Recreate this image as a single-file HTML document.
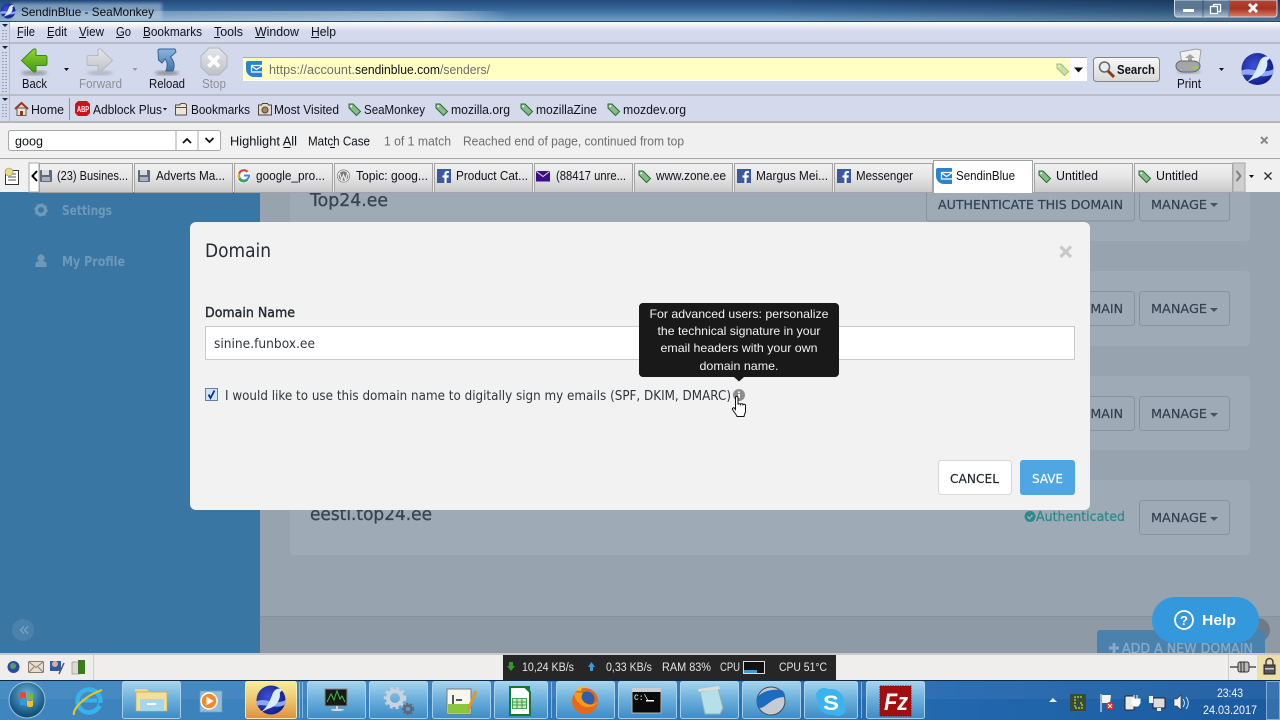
<!DOCTYPE html>
<html><head><meta charset="utf-8"><title>SendinBlue - SeaMonkey</title>
<style>
html,body{margin:0;padding:0;background:#97a3af;overflow:hidden}
svg{display:block;position:absolute;left:0;top:0}
text{font-family:"Liberation Sans",sans-serif;font-size:12.5px;fill:#10121a;white-space:pre}
.p{font-family:"DejaVu Sans",sans-serif}
.g{fill:#6e6e6e}
.l{fill:#8b8f96}
.m{font-family:"DejaVu Sans",sans-serif;font-size:12.5px;fill:#323f4f;stroke:#323f4f;stroke-width:.2}
.s{font-family:"Liberation Sans",sans-serif;font-size:11.5px;fill:#e4e4e4}
.u{stroke:#10121a;stroke-width:1}
</style></head><body>
<svg width="1280" height="720" viewBox="0 0 1280 720" xmlns="http://www.w3.org/2000/svg">
<defs>
<linearGradient id="tb" x1="0" y1="0" x2="0" y2="1"><stop offset="0" stop-color="#22497a"/><stop offset=".5" stop-color="#3a6da0"/><stop offset="1" stop-color="#739fc6"/></linearGradient>
<linearGradient id="tbx" x1="0" y1="0" x2="1" y2="0"><stop offset="0" stop-color="#000" stop-opacity="0"/><stop offset=".6" stop-color="#000" stop-opacity="0"/><stop offset="1" stop-color="#000" stop-opacity=".28"/></linearGradient>
<linearGradient id="tbg" x1="0" y1="0" x2="1" y2="0"><stop offset="0" stop-color="#fff" stop-opacity=".15"/><stop offset=".85" stop-color="#fff" stop-opacity=".45"/><stop offset="1" stop-color="#fff" stop-opacity="0"/></linearGradient>
<linearGradient id="mn" x1="0" y1="0" x2="0" y2="1"><stop offset="0" stop-color="#fff"/><stop offset=".45" stop-color="#d4daed"/><stop offset="1" stop-color="#d3d9ec"/></linearGradient>
<linearGradient id="tab" x1="0" y1="0" x2="0" y2="1"><stop offset="0" stop-color="#f1f1f1"/><stop offset=".4" stop-color="#e8e8e8"/><stop offset="1" stop-color="#c9c9c9"/></linearGradient>
<linearGradient id="sb" x1="0" y1="0" x2="0" y2="1"><stop offset="0" stop-color="#f8f8f8"/><stop offset="1" stop-color="#d8d8d8"/></linearGradient>
<linearGradient id="tk" x1="0" y1="0" x2="1" y2="0"><stop offset="0" stop-color="#3f86bf"/><stop offset=".3" stop-color="#3880bd"/><stop offset=".74" stop-color="#2268ae"/><stop offset="1" stop-color="#1b5a9f"/></linearGradient>
<linearGradient id="tkb" x1="0" y1="0" x2="0" y2="1"><stop offset="0" stop-color="#a6d4ee"/><stop offset=".5" stop-color="#69aedb"/><stop offset="1" stop-color="#3f8bc5"/></linearGradient>
<linearGradient id="tka" x1="0" y1="0" x2="0" y2="1"><stop offset="0" stop-color="#f5ee9a"/><stop offset=".5" stop-color="#efc56c"/><stop offset="1" stop-color="#dd8f3f"/></linearGradient>
<linearGradient id="gn" x1="0" y1="0" x2="0" y2="1"><stop offset="0" stop-color="#96d430"/><stop offset="1" stop-color="#3f9a12"/></linearGradient>
<linearGradient id="gy" x1="0" y1="0" x2="0" y2="1"><stop offset="0" stop-color="#e4e6ea"/><stop offset="1" stop-color="#bfc2c8"/></linearGradient>
<linearGradient id="bl" x1="0" y1="0" x2="0" y2="1"><stop offset="0" stop-color="#8cb5e0"/><stop offset="1" stop-color="#3e74ad"/></linearGradient>
<linearGradient id="red" x1="0" y1="0" x2="0" y2="1"><stop offset="0" stop-color="#b2483a"/><stop offset=".5" stop-color="#a8321f"/><stop offset="1" stop-color="#d8806c"/></linearGradient>
<linearGradient id="wb" x1="0" y1="0" x2="0" y2="1"><stop offset="0" stop-color="#5b7896"/><stop offset=".5" stop-color="#5a7693"/><stop offset="1" stop-color="#a6bccf"/></linearGradient>
<radialGradient id="sm" cx=".4" cy=".4" r=".7"><stop offset="0" stop-color="#3d50d8"/><stop offset="1" stop-color="#0c1a80"/></radialGradient>
<radialGradient id="orb" cx=".5" cy=".35" r=".7"><stop offset="0" stop-color="#6fb4d8"/><stop offset=".7" stop-color="#1b5f8c"/><stop offset="1" stop-color="#0d3d60"/></radialGradient>
<filter id="bl1"><feGaussianBlur stdDeviation="1.6"/></filter>
<g id="tag"><path d="M1 1 L5 1 L12.500 8.500 L8.500 12.500 L1 5 Z" fill="#86bd88" stroke="#2a6b3a" stroke-width="1"/><circle cx="3.200" cy="3.200" r=".9" fill="#fff"/></g>
<g id="fb"><rect width="14" height="14" fill="#3b5a9e"/><path d="M9.600 14V8.600h1.900l.3-2.200H9.600V5.100c0-.7.2-1.100 1.100-1.100h1.200V2.100C11.600 2 11 2 10.300 2 8.600 2 7.400 3 7.400 4.900v1.500H5.500v2.200h1.900V14z" fill="#fff"/></g>
<g id="doc"><rect x="1" y="1" width="12" height="12" rx="1" fill="#5d6b7c"/><rect x="3" y="1" width="7" height="5" fill="#d7dbe2"/><rect x="3" y="8" width="8" height="4" fill="#a9b2bd"/></g>
<g id="sib"><path d="M2 0H16V16H8A8 8 0 0 1 0 8V2A2 2 0 0 1 2 0Z" fill="#2a83d0"/><path d="M16 4.500H5.500V11H16M5.500 5L10.500 8.500L16 5" fill="none" stroke="#fff" stroke-width="1.200"/></g>
<g id="logo"><circle r="10" fill="url(#sm)"/><path d="M-10 1 C-4 -2 3 4 10 0 L10 3 C3 7 -4 2 -10 4Z" fill="#8fa6f5"/><path d="M-8 9 C-3 6 -1 1 1 -4 C2 -7 5 -9 8 -7 L6 -5 C7 0 3 5 -2 6 C-4 7 -6 8 -8 9Z" fill="#d9ecfb"/></g>
<g id="caret"><path d="M0 0h8l-4 4z" fill="#4a525c"/></g>
</defs>

<!-- page background -->
<rect y="192" width="1280" height="462" fill="#97a3af"/>
<rect y="192" width="260" height="462" fill="#3a76a3"/>
<rect x="260" y="616" width="1020" height="38" fill="#8e9aa5"/>
<rect x="260" y="616" width="1020" height="1" fill="#87939e"/>
<rect x="290" y="150" width="960" height="91" rx="4" fill="#9eaab6"/>
<rect x="290" y="271" width="960" height="75" rx="4" fill="#9eaab6"/>
<rect x="290" y="376" width="960" height="74" rx="4" fill="#9eaab6"/>
<rect x="290" y="480" width="960" height="75" rx="4" fill="#9eaab6"/>

<!-- sidebar -->
<circle cx="41" cy="210" r="4.500" fill="none" stroke="#6e99b9" stroke-width="3.200"/>
<circle cx="41" cy="210" r="6" fill="none" stroke="#6e99b9" stroke-width="1.600" stroke-dasharray="2 2.700"/>
<text x="62" y="215" textLength="50" lengthAdjust="spacingAndGlyphs" class="p" style="font-size:13px;font-weight:700;fill:#6e99b9">Settings</text>
<circle cx="41" cy="258" r="3.600" fill="#6e99b9"/><path d="M35.500 267v-3c0-2 2-3 5.500-3s5.500 1 5.500 3v3z" fill="#6e99b9"/>
<text x="62" y="266" textLength="63" lengthAdjust="spacingAndGlyphs" class="p" style="font-size:13px;font-weight:700;fill:#6e99b9">My Profile</text>
<circle cx="23" cy="630" r="11" fill="#4a82ab"/>
<path d="M24 626.500l-3.500 3.500 3.500 3.500M28 626.500l-3.500 3.500 3.500 3.500" fill="none" stroke="#7ba3c2" stroke-width="1.300"/>

<!-- rows -->
<text x="310" y="206" textLength="78" lengthAdjust="spacingAndGlyphs" class="p" style="font-size:18px;font-weight:400;fill:#38434f;stroke:#38434f;stroke-width:.3">Top24.ee</text>
<text x="310" y="520" textLength="122" lengthAdjust="spacingAndGlyphs" class="p" style="font-size:18px;fill:#38434f;stroke:#38434f;stroke-width:.3">eesti.top24.ee</text>

<rect x="926.500" y="180" width="208" height="41" rx="3" fill="none" stroke="#8793a0"/>
<text x="938" y="209" textLength="185" lengthAdjust="spacingAndGlyphs" class="m">AUTHENTICATE THIS DOMAIN</text>
<rect x="926.500" y="291.500" width="208" height="34" rx="3" fill="none" stroke="#8793a0"/>
<text x="938" y="313" textLength="185" lengthAdjust="spacingAndGlyphs" class="m">AUTHENTICATE THIS DOMAIN</text>
<rect x="926.500" y="396.500" width="208" height="34" rx="3" fill="none" stroke="#8793a0"/>
<text x="938" y="418" textLength="185" lengthAdjust="spacingAndGlyphs" class="m">AUTHENTICATE THIS DOMAIN</text>

<rect x="1139.500" y="180" width="90" height="41" rx="3" fill="none" stroke="#8793a0"/>
<text x="1151" y="209" textLength="56" lengthAdjust="spacingAndGlyphs" class="m">MANAGE</text><use href="#caret" x="1210" y="203"/>
<rect x="1139.500" y="291.500" width="90" height="34" rx="3" fill="none" stroke="#8793a0"/>
<text x="1151" y="313" textLength="56" lengthAdjust="spacingAndGlyphs" class="m">MANAGE</text><use href="#caret" x="1210" y="308"/>
<rect x="1139.500" y="396.500" width="90" height="34" rx="3" fill="none" stroke="#8793a0"/>
<text x="1151" y="418" textLength="56" lengthAdjust="spacingAndGlyphs" class="m">MANAGE</text><use href="#caret" x="1210" y="413"/>
<rect x="1139.500" y="500.500" width="90" height="34" rx="3" fill="none" stroke="#8793a0"/>
<text x="1151" y="522" textLength="56" lengthAdjust="spacingAndGlyphs" class="m">MANAGE</text><use href="#caret" x="1210" y="517"/>

<circle cx="1030" cy="516.500" r="5.500" fill="#2c8a8a"/><path d="M1027.500 516.500l2 2 3-3.500" fill="none" stroke="#9eaab6" stroke-width="1.500"/>
<text x="1036" y="521" textLength="89" lengthAdjust="spacingAndGlyphs" class="p" style="font-size:13px;fill:#2c8a8a;stroke:#2c8a8a;stroke-width:.25">Authenticated</text>

<!-- add new + help -->
<circle cx="1258" cy="630" r="12" fill="#6f7a85"/>
<rect x="1097" y="630" width="168" height="30" rx="3" fill="#4b82ad"/>
<path d="M1109 648h10M1114 643v10" stroke="#86abc8" stroke-width="3"/>
<text x="1122" y="653" textLength="131" lengthAdjust="spacingAndGlyphs" class="p" style="font-size:13px;fill:#86abc8;stroke:#86abc8;stroke-width:.35">ADD A NEW DOMAIN</text>
<rect x="1152" y="597" width="107" height="46" rx="23" fill="#3398dc"/>
<circle cx="1184" cy="620" r="9" fill="none" stroke="#fff" stroke-width="1.800"/>
<text x="1180" y="625" style="font-size:13px;font-weight:700;fill:#fff">?</text>
<text x="1202" y="625" textLength="34" lengthAdjust="spacingAndGlyphs" style="font-size:15px;font-weight:700;fill:#fff">Help</text>

<!-- modal -->
<rect x="190" y="222" width="900" height="288" rx="6" fill="#f2f2f2"/>
<text x="205" y="257" textLength="66" lengthAdjust="spacingAndGlyphs" class="p" style="font-size:18.500px;fill:#262b33">Domain</text>
<path d="M1060.500 246.500l10.500 10.500M1071 246.500l-10.500 10.500" stroke="#c9c9c9" stroke-width="3.200"/>
<text x="205" y="317" textLength="90" lengthAdjust="spacingAndGlyphs" class="p" style="font-size:13.500px;fill:#262b33;stroke:#262b33;stroke-width:.4">Domain Name</text>
<rect x="205.500" y="326.500" width="869" height="33" fill="#fff" stroke="#cbcbcb"/>
<text x="214" y="348" textLength="101" lengthAdjust="spacingAndGlyphs" class="p" style="font-size:13.500px;fill:#30353c">sinine.funbox.ee</text>
<rect x="205.500" y="388.500" width="12" height="12" fill="#cfe4f7" stroke="#5d84a6"/>
<path d="M208.500 394.500l2 3.500 4-7.500" fill="none" stroke="#0d2d8a" stroke-width="1.800"/>
<text x="225" y="400" textLength="506" lengthAdjust="spacingAndGlyphs" class="p" style="font-size:13px;fill:#30353c">I would like to use this domain name to digitally sign my emails (SPF, DKIM, DMARC)</text>
<circle cx="739" cy="395" r="6" fill="#8d8d8d"/><rect x="738" y="394" width="2" height="4" fill="#f0f0f0"/><rect x="738" y="391.500" width="2" height="1.600" fill="#f0f0f0"/>
<rect x="938.500" y="460.500" width="73" height="34" rx="3" fill="#fff" stroke="#d8d8d8"/>
<text x="950" y="483" textLength="49" lengthAdjust="spacingAndGlyphs" class="p" style="font-size:12.500px;fill:#20242a;stroke:#20242a;stroke-width:.15">CANCEL</text>
<rect x="1020" y="460" width="55" height="35" rx="3" fill="#4fa6e3"/>
<text x="1032" y="483" textLength="31" lengthAdjust="spacingAndGlyphs" class="p" style="font-size:12.500px;fill:#fff;stroke:#fff;stroke-width:.15">SAVE</text>

<!-- tooltip -->
<rect x="639" y="303" width="200" height="74" rx="4" fill="#191919"/>
<path d="M734 377h10l-5 4.500z" fill="#191919"/>
<text x="739" y="318" text-anchor="middle" textLength="179" lengthAdjust="spacingAndGlyphs" style="font-size:12px;fill:#f2f2f2">For advanced users: personalize</text>
<text x="739" y="335" text-anchor="middle" textLength="163" lengthAdjust="spacingAndGlyphs" style="font-size:12px;fill:#f2f2f2">the technical signature in your</text>
<text x="739" y="352" text-anchor="middle" textLength="157" lengthAdjust="spacingAndGlyphs" style="font-size:12px;fill:#f2f2f2">email headers with your own</text>
<text x="739" y="370" text-anchor="middle" textLength="79" lengthAdjust="spacingAndGlyphs" style="font-size:12px;fill:#f2f2f2">domain name.</text>
<!-- cursor -->
<path d="M735.500 397.500c0-1.500 2.500-1.500 2.500 0v7c.5-1 2.300-1 2.500 0 .4-1 2.300-1 2.500.2.500-.8 2.500-.6 2.500.8v5.500c0 2-1 3-1.500 5.500h-7c-.5-2-3.500-5-4.500-7-.6-1.300 1-2.300 2-1.300l1 1.300z" fill="#fff" stroke="#111" stroke-width="1"/>

<!-- title bar -->
<rect width="1280" height="21" fill="url(#tb)"/>
<rect width="1280" height="21" fill="url(#tbx)"/>
<rect x="0" y="11" width="510" height="10" fill="url(#tbg)"/>
<rect x="0" y="21" width="1280" height="1" fill="#2a4864"/>
<rect x="12" y="3" width="150" height="17" fill="#c3d4e2" opacity=".5" filter="url(#bl1)"/>
<use href="#logo" transform="translate(8,11) scale(.75)"/>
<text x="21" y="16" textLength="133" lengthAdjust="spacingAndGlyphs" style="font-size:12px;fill:#0c0c10">SendinBlue - SeaMonkey</text>
<g>
<path d="M1174.500 0v14a3 3 0 0 0 3 3H1229V0z" fill="url(#wb)" stroke="#cfdbe6" stroke-width="1"/>
<path d="M1229 0h48v14a3 3 0 0 1-3 3h-45z" fill="url(#red)" stroke="#cfdbe6" stroke-width="1"/>
<path d="M1203 0v17M1229 0v17" stroke="#24384d" stroke-opacity=".6"/>
<rect x="1183" y="9" width="11" height="3" fill="#fff"/>
<rect x="1213.500" y="4.500" width="7" height="7" fill="none" stroke="#fff" stroke-width="1.300"/><rect x="1210.500" y="6.500" width="7" height="7" fill="#5a7693" stroke="#fff" stroke-width="1.300"/>
<path d="M1249 4l8 8M1257 4l-8 8" stroke="#fff" stroke-width="3"/>
</g>

<!-- menubar -->
<rect y="22" width="1280" height="20" fill="url(#mn)"/>
<rect y="42" width="1280" height="2" fill="#b8bbc3"/>
<rect y="44" width="1280" height="50" fill="#d3d9ec"/>
<rect y="94" width="1280" height="2" fill="#babdc6"/>
<rect y="96" width="1280" height="25" fill="#d4daeb"/>
<rect y="121" width="1280" height="2" fill="#b6b6b6"/>
<rect y="123" width="1280" height="35" fill="#f0f0f0"/>
<rect y="158" width="1280" height="1" fill="#a8a8a8"/>
<rect y="159" width="1280" height="33" fill="#f0f0f0"/>
<!-- grips -->
<g fill="#4a5a75">
<rect x="0" y="22" width="9" height="20" fill="#d3d9ec"/><rect x="0" y="44" width="9" height="50" fill="#d3d9ec"/><rect x="0" y="96" width="9" height="25" fill="#d3d9ec"/>
<rect x="9" y="22" width="1" height="99" fill="#b8bbc3"/>
<path d="M2 24h6l-3 3z M2 46h6l-3 3z M2 98h6l-3 3z" fill="#1a2440"/>
<path d="M3 30v10M6 30v10M3 52v40M6 52v40M3 104v15M6 104v15" stroke="#606a85" stroke-width="1" stroke-dasharray="1 2" fill="none"/>
</g>
<g>
<text x="17" y="36" textLength="18" lengthAdjust="spacingAndGlyphs">File</text>
<text x="47" y="36" textLength="20" lengthAdjust="spacingAndGlyphs">Edit</text>
<text x="79" y="36" textLength="25" lengthAdjust="spacingAndGlyphs">View</text>
<text x="116" y="36" textLength="15" lengthAdjust="spacingAndGlyphs">Go</text>
<text x="143" y="36" textLength="59" lengthAdjust="spacingAndGlyphs">Bookmarks</text>
<text x="214" y="36" textLength="29" lengthAdjust="spacingAndGlyphs">Tools</text>
<text x="255" y="36" textLength="44" lengthAdjust="spacingAndGlyphs">Window</text>
<text x="311" y="36" textLength="25" lengthAdjust="spacingAndGlyphs">Help</text>
<path class="u" d="M17 37.500h6M47 37.500h6M79 37.500h7M116 37.500h8M143 37.500h7M214 37.500h6M255 37.500h10M311 37.500h8"/>
</g>

<!-- nav toolbar -->
<ellipse cx="34" cy="73" rx="13" ry="2.500" fill="#666" opacity=".55" filter="url(#bl1)"/>
<path d="M21.500 60.500L33 49.500q2-1.500 3 .5v5.500h9q2 0 2 2v6q0 2-2 2h-9v5.500q-1 2-3 .5z" fill="url(#gn)" stroke="#3d8a13"/>
<path d="M64 68h5l-2.500 3z" fill="#111"/>
<ellipse cx="100" cy="73" rx="13" ry="2.500" fill="#888" opacity=".4" filter="url(#bl1)"/>
<path d="M112.500 60.500L101 49.500q-2-1.500-3 .5v5.500h-9q-2 0-2 2v6q0 2 2 2h9v5.500q1 2 3 .5z" fill="url(#gy)" stroke="#b5b8be"/>
<path d="M132.500 68h5l-2.500 3z" fill="#9a9a9a"/>
<ellipse cx="167" cy="73" rx="12" ry="2.500" fill="#555" opacity=".55" filter="url(#bl1)"/>
<path d="M158 50.500Q158 49 160 49L175 49L176 52L170.500 57C174 61 175 66 173 71L166 71C168 65 167 61 165 59L162 63L158.500 60Z" fill="url(#bl)" stroke="#38618f"/>
<path d="M209 48h10l8 8v11l-8 8h-10l-8-8v-11z" fill="url(#gy)" stroke="#b2b5bb"/>
<path d="M208.500 56l10.500 10.500M219 56l-10.500 10.500" stroke="#fff" stroke-width="3.800"/>
<text x="22" y="88" textLength="25" lengthAdjust="spacingAndGlyphs">Back</text>
<text x="79" y="88" textLength="43" lengthAdjust="spacingAndGlyphs" class="l">Forward</text>
<text x="149" y="88" textLength="36" lengthAdjust="spacingAndGlyphs">Reload</text>
<text x="202" y="88" textLength="24" lengthAdjust="spacingAndGlyphs" class="l">Stop</text>

<!-- url bar -->
<rect x="243" y="58" width="844" height="23" fill="#fff"/>
<rect x="243" y="58" width="827" height="22" fill="#ffffc4"/>
<rect x="243" y="57" width="844" height="1" fill="#a9a9a9"/>
<use href="#sib" transform="translate(246,61)"/>
<text x="269" y="74" textLength="86" lengthAdjust="spacingAndGlyphs" class="g">https://account.</text>
<text x="355" y="74" textLength="85" lengthAdjust="spacingAndGlyphs">sendinblue.com</text>
<text x="440" y="74" textLength="50" lengthAdjust="spacingAndGlyphs" class="g">/senders/</text>
<g opacity=".45" transform="translate(1056,63)"><use href="#tag"/></g>
<path d="M1074 67.500h9l-4.500 5z" fill="#111"/>
<rect x="1093.500" y="57.500" width="66" height="24" rx="3" fill="url(#sb)" stroke="#858585"/>
<circle cx="1104.500" cy="67" r="5" fill="#e6eef4" stroke="#666" stroke-width="1.500"/>
<path d="M1108 71l6 6" stroke="#8a3d10" stroke-width="3"/>
<text x="1117" y="74" textLength="38" lengthAdjust="spacingAndGlyphs" style="font-weight:700;font-size:12.500px">Search</text>
<!-- print -->
<ellipse cx="1189" cy="72" rx="12" ry="2" fill="#777" opacity=".5" filter="url(#bl1)"/>
<path d="M1180 52l16-3 5 1-2 14h-17z" fill="#f1f1f1" stroke="#a0a0a0"/>
<path d="M1190 54l-5 4h3v4h4v-4h3z" fill="#a5a5a5"/>
<path d="M1176 66c0-3 3-5 5-5h12c4 0 7 2 7 5s-3 6-9 6h-8c-4 0-7-3-7-6z" fill="#a3a5aa" stroke="#666"/>
<ellipse cx="1195" cy="67.500" rx="3" ry="1.500" fill="#8ed04a"/>
<text x="1177" y="88" textLength="24" lengthAdjust="spacingAndGlyphs">Print</text>
<path d="M1219 68h5l-2.500 3z" fill="#111"/>
<use href="#logo" transform="translate(1257.500,69) scale(1.600)"/>

<!-- bookmarks -->
<path d="M15 109l6.500-6 6.500 6" fill="none" stroke="#a0331d" stroke-width="2"/><rect x="17" y="108" width="9" height="7.500" fill="#ece6da" stroke="#6b5b4b"/><rect x="20" y="111" width="3" height="4.500" fill="#8a3d10"/>
<text x="31" y="114" textLength="33" lengthAdjust="spacingAndGlyphs">Home</text>
<rect x="69" y="98" width="1" height="22" fill="#8a8f9c"/>
<path d="M78 101h9l3 3v9l-3 3h-9l-3-3v-9z" fill="#d1111a"/>
<text x="77" y="112" textLength="12" lengthAdjust="spacingAndGlyphs" style="font-size:8px;font-weight:700;fill:#fff">ABP</text>
<text x="93" y="114" textLength="69" lengthAdjust="spacingAndGlyphs">Adblock Plus</text>
<path d="M163 108h4l-2 2.500z" fill="#111"/>
<path d="M175.500 115v-10h4l1.500-1.500h4l1.500 1.500v10z" fill="#ece6da" stroke="#584c3c"/><rect x="176" y="107" width="11" height="1" fill="#584c3c"/>
<text x="191" y="114" textLength="59" lengthAdjust="spacingAndGlyphs">Bookmarks</text>
<path d="M258.500 115v-10h3l1-1.500h5l1 1.500h3v10z" fill="#e3dcce" stroke="#4f4337"/><circle cx="265" cy="110" r="3" fill="#b08663" stroke="#4f4337"/>
<text x="274" y="114" textLength="65" lengthAdjust="spacingAndGlyphs">Most Visited</text>
<use href="#tag" x="348" y="103"/><text x="364" y="114" textLength="61" lengthAdjust="spacingAndGlyphs">SeaMonkey</text>
<use href="#tag" x="435" y="103"/><text x="451" y="114" textLength="59" lengthAdjust="spacingAndGlyphs">mozilla.org</text>
<use href="#tag" x="520" y="103"/><text x="536" y="114" textLength="61" lengthAdjust="spacingAndGlyphs">mozillaZine</text>
<use href="#tag" x="607" y="103"/><text x="623" y="114" textLength="63" lengthAdjust="spacingAndGlyphs">mozdev.org</text>

<!-- find bar -->
<rect x="8.500" y="130.500" width="212" height="20" rx="2" fill="#fff" stroke="#a9a9a9"/>
<path d="M176 130v21M198 130v21" stroke="#a9a9a9"/>
<path d="M183 143l4-4 4 4M205.500 138l4 4 4-4" fill="none" stroke="#111" stroke-width="1.800"/>
<text x="15" y="145.500" textLength="28" lengthAdjust="spacingAndGlyphs">goog</text>
<text x="230" y="145.500" textLength="67" lengthAdjust="spacingAndGlyphs">Highlight All</text>
<path class="u" d="M283.500 147.500h7M330 147.500h5"/>
<text x="308" y="145.500" textLength="62" lengthAdjust="spacingAndGlyphs">Match Case</text>
<text x="384" y="145.500" textLength="67" lengthAdjust="spacingAndGlyphs" class="g">1 of 1 match</text>
<text x="463" y="145.500" textLength="221" lengthAdjust="spacingAndGlyphs" class="g">Reached end of page, continued from top</text>
<path d="M1261 137l6.500 6.500M1267.500 137l-6.500 6.500" stroke="#8a8a8a" stroke-width="2"/>

<!-- tabs -->
<rect x="5.500" y="170.500" width="13" height="14" fill="#fff" stroke="#333"/>
<path d="M8 174h8M8 177h8M8 180h8" stroke="#555"/>
<circle cx="9" cy="172" r="4" fill="#e9dd7a" stroke="#888" stroke-width=".6"/>
<rect x="29" y="163" width="10" height="29" fill="#fff" stroke="#a9a9a9"/>
<path d="M37 171l-4.500 5 4.500 5" fill="none" stroke="#000" stroke-width="2"/>
<g stroke="#a3a3a3" fill="url(#tab)">
<rect x="39.500" y="163.500" width="93" height="29"/>
<rect x="134.500" y="163.500" width="98" height="29"/>
<rect x="234.500" y="163.500" width="98" height="29"/>
<rect x="334.500" y="163.500" width="98" height="29"/>
<rect x="434.500" y="163.500" width="98" height="29"/>
<rect x="534.500" y="163.500" width="98" height="29"/>
<rect x="634.500" y="163.500" width="98" height="29"/>
<rect x="734.500" y="163.500" width="98" height="29"/>
<rect x="834.500" y="163.500" width="98" height="29"/>
<rect x="1034.500" y="163.500" width="98" height="29"/>
<rect x="1134.500" y="163.500" width="98" height="29"/>
</g>
<rect x="933.500" y="160.500" width="99" height="32" fill="#fff" stroke="#a3a3a3"/>
<rect x="934" y="190" width="98" height="3" fill="#fff"/>
<rect x="1233" y="163" width="12" height="29" fill="#cfcfcf" stroke="#a9a9a9"/>
<path d="M1236.500 171l4 5-4 5" fill="none" stroke="#808080" stroke-width="2"/>
<path d="M1249 175h5l-2.500 3z" fill="#111"/>
<path d="M1264.500 172.500l7 7M1271.500 172.500l-7 7" stroke="#222" stroke-width="1.300"/>
<rect y="192" width="1280" height="1" fill="#3a76a3" opacity="0"/>
<use href="#doc" x="39" y="169"/>
<use href="#doc" x="137" y="169"/>
<circle cx="243.500" cy="176" r="7" fill="#fff"/>
<path d="M244 175.500h5a5 5 0 1 1-1.500-3.600" fill="none" stroke="#4285f4" stroke-width="2"/><path d="M239 173.500a5 5 0 0 1 8.500-1.600" fill="none" stroke="#ea4335" stroke-width="2"/><path d="M239 173.500a5 5 0 0 0 0 5" fill="none" stroke="#fbbc05" stroke-width="2"/><path d="M239 178.500a5 5 0 0 0 8.500 1" fill="none" stroke="#34a853" stroke-width="2"/>
<circle cx="343.500" cy="176" r="6.500" fill="#7a7a7a"/><circle cx="343.500" cy="176" r="5.300" fill="none" stroke="#f0f0f0"/><path d="M339.500 173l2.500 7 1.500-5 2 5 2-7" fill="none" stroke="#f0f0f0" stroke-width="1.200"/>
<use href="#fb" x="437" y="169"/>
<rect x="536" y="171" width="14" height="10.500" fill="#3b0f8a"/><path d="M536.500 171.500l6.500 5 6.500-5" fill="none" stroke="#e4e0f0"/>
<use href="#tag" x="638" y="170"/>
<use href="#fb" x="737" y="169"/>
<use href="#fb" x="837" y="169"/>
<use href="#sib" x="936" y="168"/>
<use href="#tag" x="1038" y="170"/>
<use href="#tag" x="1138" y="170"/>
<text x="57" y="180" textLength="71" lengthAdjust="spacingAndGlyphs">(23) Busines...</text>
<text x="156" y="180" textLength="69" lengthAdjust="spacingAndGlyphs">Adverts Ma...</text>
<text x="256" y="180" textLength="69" lengthAdjust="spacingAndGlyphs">google_pro...</text>
<text x="356" y="180" textLength="72" lengthAdjust="spacingAndGlyphs">Topic: goog...</text>
<text x="456" y="180" textLength="72" lengthAdjust="spacingAndGlyphs">Product Cat...</text>
<text x="556" y="180" textLength="70" lengthAdjust="spacingAndGlyphs">(88417 unre...</text>
<text x="656" y="180" textLength="70" lengthAdjust="spacingAndGlyphs">www.zone.ee</text>
<text x="756" y="180" textLength="72" lengthAdjust="spacingAndGlyphs">Margus Mei...</text>
<text x="856" y="180" textLength="57" lengthAdjust="spacingAndGlyphs">Messenger</text>
<text x="956" y="180" textLength="59" lengthAdjust="spacingAndGlyphs">SendinBlue</text>
<text x="1056" y="180" textLength="42" lengthAdjust="spacingAndGlyphs">Untitled</text>
<text x="1156" y="180" textLength="42" lengthAdjust="spacingAndGlyphs">Untitled</text>

<!-- status bar -->
<rect y="654" width="1280" height="26" fill="#f0eeec"/>
<rect y="653" width="1280" height="2" fill="#c9c9c9"/>
<rect x="93" y="655" width="1" height="25" fill="#d0cecc"/>
<circle cx="13.500" cy="667" r="6" fill="#2b4aa8"/><circle cx="13" cy="666" r="3" fill="#5a9a6a"/>
<rect x="28.500" y="661.500" width="15" height="11" rx="1" fill="#e8ddd0" stroke="#8a7a6a"/><path d="M29 662l7 5.500 7-5.500M29 672l5-5M43 672l-5-5" fill="none" stroke="#8a7a6a"/>
<rect x="50" y="661" width="11" height="10" fill="#2e5aa8"/><circle cx="55" cy="664" r="3" fill="#d6b38a"/><path d="M59 674l5-11" stroke="#555" stroke-width="1.500"/>
<rect x="72" y="662" width="8" height="12" fill="#d9d9d9" stroke="#888" stroke-width=".6"/><rect x="78" y="660" width="7" height="14" fill="#3e7a1d"/>
<rect x="503" y="655" width="333" height="25" fill="#262626"/>
<path d="M509 662h4v4h2l-4 5-4-5h2z" fill="#2f9a2a"/>
<text x="522" y="671" textLength="52" lengthAdjust="spacingAndGlyphs" class="s">10,24 KB/s</text>
<path d="M588 667l3.500-5 3.500 5h-2v4h-3v-4z" fill="#3a9ae0"/>
<text x="606" y="671" textLength="46" lengthAdjust="spacingAndGlyphs" class="s">0,33 KB/s</text>
<text x="662" y="671" textLength="49" lengthAdjust="spacingAndGlyphs" class="s">RAM 83%</text>
<text x="720" y="671" textLength="20" lengthAdjust="spacingAndGlyphs" class="s">CPU</text>
<rect x="743.500" y="661.500" width="21" height="12" fill="#111" stroke="#ddd"/>
<rect x="744" y="670" width="13" height="3" fill="#3a9ae0"/>
<text x="779" y="671" textLength="48" lengthAdjust="spacingAndGlyphs" class="s">CPU 51°C</text>
<rect x="1228" y="655" width="1" height="25" fill="#d0cecc"/>
<path d="M1230 667h26" stroke="#333" stroke-width="1.200"/><rect x="1238" y="662" width="11" height="10" rx="2" fill="#bbb" stroke="#333"/><path d="M1241 662v10M1244 662v10" stroke="#222"/>
<rect x="1257" y="655" width="23" height="25" fill="#ecdfa8"/>
<rect x="1264" y="665" width="11" height="9" fill="#555" stroke="#222"/><path d="M1266 665v-3a3.500 3.500 0 0 1 7 0v3" fill="none" stroke="#444" stroke-width="1.500"/><rect x="1265" y="668" width="9" height="1.500" fill="#ccc"/>

<!-- taskbar -->
<rect y="680" width="1280" height="40" fill="url(#tk)"/>
<rect y="680" width="1280" height="1" fill="#0e2a44"/>
<rect y="681" width="1280" height="18" fill="#fff" opacity=".05"/>
<circle cx="27" cy="700" r="18" fill="url(#orb)" stroke="#9fc6dc" stroke-width="1"/>
<g transform="translate(20,692)"><path d="M0 1c2-1.500 4-1.500 6 0v6c-2-1.500-4-1.500-6 0z" fill="#e64b2a"/><path d="M7 1c2 1.500 4 1.500 6 0v6c-2 1.500-4 1.500-6 0z" fill="#7cbb2a"/><path d="M0 8c2-1.500 4-1.500 6 0v6c-2-1.500-4-1.500-6 0z" fill="#2f9be0"/><path d="M7 8c2 1.500 4 1.500 6 0v6c-2 1.500-4 1.500-6 0z" fill="#f5c11c"/></g>
<!-- IE -->
<g transform="translate(89,701)"><circle r="11.500" fill="none" stroke="#35b3ea" stroke-width="4.500"/><rect x="-8" y="-2.500" width="16" height="4" fill="#35b3ea"/><path d="M10 2h4v3h-4z" fill="#3a82be"/><path d="M-15 14c-2-6 12-20 28-25" fill="none" stroke="#f0c419" stroke-width="2"/></g>
<!-- buttons -->
<g stroke="#bfe0f4" stroke-opacity=".8">
<rect x="122.500" y="681.500" width="58" height="37" rx="2" fill="url(#tkb)"/>
<rect x="307.500" y="681.500" width="58" height="37" rx="2" fill="url(#tkb)"/>
<rect x="369.500" y="681.500" width="58" height="37" rx="2" fill="url(#tkb)"/>
<rect x="432.500" y="681.500" width="58" height="37" rx="2" fill="url(#tkb)"/>
<rect x="494.500" y="681.500" width="53" height="37" rx="2" fill="url(#tkb)"/>
<rect x="556.500" y="681.500" width="58" height="37" rx="2" fill="url(#tkb)"/>
<rect x="618.500" y="681.500" width="58" height="37" rx="2" fill="url(#tkb)"/>
<rect x="680.500" y="681.500" width="58" height="37" rx="2" fill="url(#tkb)"/>
<rect x="742.500" y="681.500" width="58" height="37" rx="2" fill="url(#tkb)"/>
<rect x="804.500" y="681.500" width="53" height="37" rx="2" fill="url(#tkb)"/>
<rect x="866.500" y="681.500" width="58" height="37" rx="2" fill="url(#tkb)"/>
</g>
<rect x="245.500" y="681.500" width="51" height="37" rx="2" fill="url(#tka)" stroke="#fbe9b0"/>
<path d="M299.500 682v36M302.500 682v36M551.500 682v36M861.500 682v36" stroke="#bcdcf0" stroke-opacity=".6"/>
<!-- folder -->
<path d="M135 689h12l2 3h-14z" fill="#f0d58a"/><path d="M136 692h31v19h-31z" fill="#f3df9c" stroke="#c8a850" stroke-width=".7"/><rect x="140" y="699" width="24" height="12" fill="#a5d6ea"/><rect x="147" y="703" width="9" height="2" fill="#fff"/>
<!-- wmp -->
<rect x="200" y="691" width="22" height="21" fill="#97bcd6" stroke="#6d9bbd" stroke-width=".7"/><circle cx="209" cy="701" r="8" fill="#f18a28" stroke="#fff" stroke-width="1.500"/><path d="M206.500 696.500l7 4.500-7 4.500z" fill="#fff"/>
<!-- seamonkey -->
<use href="#logo" transform="translate(271,700) scale(1.450)"/>
<!-- monitor -->
<rect x="325" y="689" width="22" height="17" fill="#1a1a1a" stroke="#888"/><path d="M327 702l4-8 3 6 3-9 3 8 2-3 3 6" fill="none" stroke="#3fbf3f"/><path d="M336 706v3h-5c0 2 3 2 6 2s7 0 7-2h-6v-3z" fill="#d5d8dc"/>
<!-- gears -->
<circle cx="395" cy="698" r="7" fill="none" stroke="#c8d3df" stroke-width="4"/><circle cx="395" cy="698" r="10" fill="none" stroke="#c8d3df" stroke-width="2.500" stroke-dasharray="3 3"/><circle cx="408" cy="709" r="3.500" fill="none" stroke="#5f6670" stroke-width="2.500"/><circle cx="408" cy="709" r="5.500" fill="none" stroke="#5f6670" stroke-width="1.500" stroke-dasharray="2 2"/>
<!-- note -->
<rect x="447" y="689" width="24" height="25" fill="#f7f7f0" stroke="#7a7a7a"/><rect x="448" y="704" width="22" height="9" fill="#8cc63e"/><path d="M453 695v9M456 700h6" stroke="#222" stroke-width="1.500"/><path d="M476 691l-8 19" stroke="#d99a2b" stroke-width="3"/>
<!-- calc -->
<path d="M510 687h15l5 5v23h-20z" fill="#fff" stroke="#0f7a30" stroke-width="2"/><path d="M525 686h5v5z" fill="#0f7a30"/>
<path d="M512.500 698.500h14v10h-14zM512.500 702h14M512.500 705h14M517 698.500v10M522 698.500v10" fill="#cfe8b8" stroke="#1f8a3a" stroke-width=".8"/>
<!-- firefox -->
<circle cx="585" cy="701" r="13" fill="#e8681a"/><circle cx="587" cy="699" r="7.500" fill="#2f5fa8"/><path d="M574 694c3 14 18 17 24 8-2 1-8 5-14 0-3-3-3-6-1-9-3 0-7-2-9 1z" fill="#f39a1f"/><path d="M576 690c2-3 6-4 8-4-2 2-3 3-3 5z" fill="#f7c21d"/>
<!-- cmd -->
<rect x="632" y="688" width="29" height="25" fill="#0a0a0a" stroke="#b5b5b5"/><rect x="632" y="688" width="29" height="4" fill="#c9ced4"/>
<text x="634" y="700" style="font-family:'Liberation Mono',monospace;font-size:8px;fill:#fff">C:\</text><rect x="646" y="700" width="8" height="1.500" fill="#fff"/>
<!-- notepad -->
<path d="M700 692l18-4 5 20-3 6-15 0z" fill="#b7dfe8" stroke="#8fb0ba"/><path d="M698 689l21-3 1 3-21 3z" fill="#dcdcdc"/>
<!-- globe -->
<circle cx="771" cy="701" r="14" fill="#c5cbd3" stroke="#454a52"/><path d="M757 698c4-6 12-9 24-8 3 1 4 4 4 7-6 0-11 2-16 6-3 2-6 5-9 5-3-2-4-6-3-10z" fill="#1c6bbf"/>
<!-- skype -->
<circle cx="824" cy="696" r="8" fill="#3bb4ee"/><circle cx="838" cy="708" r="8" fill="#3bb4ee"/><circle cx="831" cy="702" r="13" fill="#3bb4ee"/>
<text x="823" y="710" textLength="16" lengthAdjust="spacingAndGlyphs" style="font-size:21px;font-weight:700;fill:#fff">S</text>
<!-- filezilla -->
<rect x="880" y="686" width="31" height="30" fill="#a30d0d" stroke="#8a0a0a" stroke-dasharray="1.500 1"/>
<text x="884" y="710" textLength="24" lengthAdjust="spacingAndGlyphs" style="font-size:24px;font-weight:700;font-style:italic;fill:#fff">Fz</text>
<!-- tray -->
<path d="M1049 702l4-4 4 4z" fill="#eaf2f8"/>
<rect x="1070" y="694" width="16" height="17" fill="#3a4a3a"/><path d="M1082 697h-7v11h7v-5h-3" fill="none" stroke="#8fd020" stroke-width="1.500" stroke-dasharray="2 1"/>
<path d="M1101 694v18" stroke="#fff"/><path d="M1102 695h9l-1 8h-8z" fill="#f4f4f4"/><circle cx="1110" cy="706" r="4" fill="#d62b1f"/><path d="M1108 704l4 4M1112 704l-4 4" stroke="#fff"/>
<rect x="1125" y="696" width="9" height="14" rx="1" fill="#e8e8e8" stroke="#222"/><path d="M1134 695v4M1137 695v4M1132 699h8v4l-2 3h-4l-2-3z" fill="#fff" stroke="#fff"/>
<rect x="1153" y="698" width="12" height="10" fill="#ddd" stroke="#222"/><rect x="1149" y="696" width="4" height="7" fill="#f4f4f4"/><rect x="1157" y="708" width="4" height="3" fill="#eee"/>
<path d="M1174 699h3l4-4v15l-4-4h-3z" fill="#f0f0f0" stroke="#333" stroke-width=".6"/><path d="M1183 699c2 3 2 5 0 8M1186 697c3 4 3 8 0 12" fill="none" stroke="#cfe0ee"/>
<text x="1217" y="697" textLength="26" lengthAdjust="spacingAndGlyphs" style="font-size:12px;fill:#f4f7fa">23:43</text>
<text x="1203" y="714" textLength="54" lengthAdjust="spacingAndGlyphs" style="font-size:12px;fill:#f4f7fa">24.03.2017</text>
<rect x="1266.500" y="681.500" width="13" height="38" fill="#5a8fc0" fill-opacity=".4" stroke="#a8cbe5" stroke-opacity=".7"/>
</svg>
</body></html>
